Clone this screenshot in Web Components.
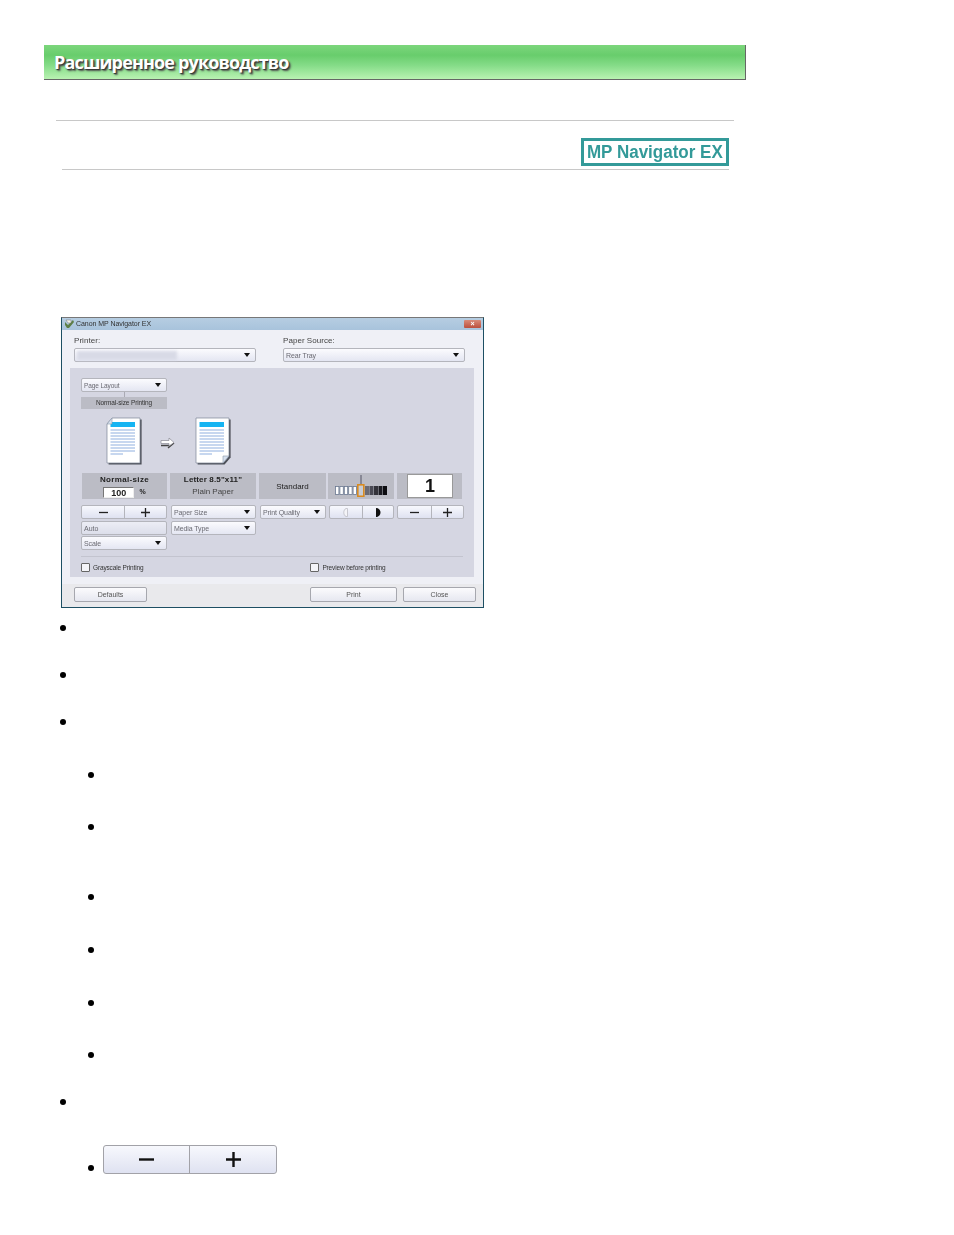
<!DOCTYPE html>
<html lang="ru">
<head>
<meta charset="utf-8">
<title>Расширенное руководство</title>
<style>
    html, body { margin: 0; background: #fff; }
    body { font-family: "Liberation Sans", Arial, sans-serif; height: 1235px; overflow: hidden; }
</style>
</head>
<body>
<guide-header>Расширенное руководство</guide-header>
<section-title>MP Navigator EX</section-title>
<print-dialog></print-dialog>
<bullet-list>
    <bullet-item gap="47"></bullet-item>
    <bullet-item gap="47"></bullet-item>
    <bullet-item gap="53"></bullet-item>
    <bullet-item level="1" gap="52"></bullet-item>
    <bullet-item level="1" gap="70"></bullet-item>
    <bullet-item level="1" gap="53"></bullet-item>
    <bullet-item level="1" gap="53"></bullet-item>
    <bullet-item level="1" gap="52"></bullet-item>
    <bullet-item level="1" gap="47"></bullet-item>
    <bullet-item gap="52"></bullet-item>
    <bullet-item level="1" gap="29" end><spin-buttons large></spin-buttons></bullet-item>
</bullet-list>

<script>
class GuideHeader extends HTMLElement {
    constructor() {
        super();
        this.attachShadow({ mode: "open" }).innerHTML = `
            <style>
                :host {
                    display: flex;
                    align-items: center;
                    box-sizing: border-box;
                    width: 702px;
                    height: 35px;
                    margin: 45px 0 0 44px;
                    padding: 0 0 0 10px;
                    border-bottom: 1px solid #666;
                    border-right: 1px solid #666;
                    background: linear-gradient(#7cd67c 0, #68cd6c 30%, #85dc88 60%, #b9f2b2 100%);
                    color: #fff;
                    font: bold 18px "Open Sans", sans-serif;
                    letter-spacing: -0.85px;
                    text-shadow: 1px 1px 1px #333, 2px 2px 2px #555;
                }
            </style>
            <slot></slot>
        `;
    }
}
customElements.define("guide-header", GuideHeader);

class SectionTitle extends HTMLElement {
    constructor() {
        super();
        this.attachShadow({ mode: "open" }).innerHTML = `
            <style>
                :host {
                    display: flex;
                    flex-direction: column;
                    margin: 40px 0 0 56px;
                    width: 678px;
                    border-top: 1px solid #c8c8c8;
                    padding-top: 17px;
                }
                .row { display: flex; justify-content: flex-end; margin-right: 5px; }
                .badge {
                    box-sizing: border-box;
                    display: flex;
                    align-items: center;
                    justify-content: center;
                    width: 148px;
                    height: 28px;
                    border: 3px solid #339a99;
                    color: #339a99;
                    font: bold 18px "Liberation Sans", sans-serif;
                    white-space: nowrap;
                }
                .badge span { display: inline-block; transform: scaleX(.945); }
                .rule { height: 1px; background: #c8c8c8; margin: 3px 5px 0 6px; }
            </style>
            <div class="row"><div class="badge"><span><slot></slot></span></div></div>
            <div class="rule"></div>
        `;
    }
}
customElements.define("section-title", SectionTitle);

class DropSelect extends HTMLElement {
    constructor() {
        super();
        this.attachShadow({ mode: "open" }).innerHTML = `
            <style>
                :host {
                    display: flex;
                    align-items: center;
                    justify-content: space-between;
                    box-sizing: border-box;
                    height: 14px;
                    padding: 0 5px 0 2px;
                    border: 1px solid #b4b5bc;
                    border-radius: 2px;
                    background: linear-gradient(#fbfbfe, #e4e6f2);
                    color: #6a6a72;
                    font-size: 7px;
                    letter-spacing: -0.1px;
                    white-space: nowrap;
                }
                i { width: 0; height: 0; border: 3.5px solid transparent; border-top: 4px solid #111; border-bottom: 0; }
            </style>
            <span><slot></slot></span><i></i>
        `;
    }
}
customElements.define("drop-select", DropSelect);

class SpinButtons extends HTMLElement {
    constructor() {
        super();
        const large = this.hasAttribute("large");
        const left = this.getAttribute("left");
        const minus = `<svg width="15" height="15" viewBox="0 0 15 15"><path d="M0 7.500h15" stroke="#111" stroke-width="2.400"/></svg>`;
        const plus = `<svg width="15" height="15" viewBox="0 0 15 15"><path d="M0 7.500h15M7.500 0v15" stroke="#111" stroke-width="2.400"/></svg>`;
        const smallMinus = `<svg width="9" height="9" viewBox="0 0 9 9"><path d="M0 4.500h9" stroke="#222" stroke-width="1.300"/></svg>`;
        const smallPlus = `<svg width="9" height="9" viewBox="0 0 9 9"><path d="M0 4.500h9M4.500 0v9" stroke="#222" stroke-width="1.300"/></svg>`;
        let a = large ? minus : smallMinus;
        let b = large ? plus : smallPlus;
        if (left === "half") {
            a = `<svg width="6" height="9" viewBox="0 0 6 9"><path d="M3 .5h1.500v8H3C1.500 8 .8 6 .8 4.500S1.500 1 3 .5z" fill="#f4f4f8" stroke="#bcbcc4" stroke-width=".8"/></svg>`;
            b = `<svg width="6" height="9" viewBox="0 0 6 9"><path d="M1 0c3 0 4.500 2.500 4.500 4.500S4 9 1 9z" fill="#111"/></svg>`;
        }
        this.attachShadow({ mode: "open" }).innerHTML = `
            <style>
                :host {
                    display: grid;
                    grid-template-columns: ${large ? "85px 1fr" : "1fr 1fr"};
                    box-sizing: border-box;
                    height: ${large ? 29 : 14}px;
                    width: ${large ? "174px" : "auto"};
                    border: 1px solid ${large ? "#a2a2a8" : "#b4b5bc"};
                    border-radius: ${large ? 3 : 2}px;
                    background: linear-gradient(#f7f8fd, #dfe2f1);
                }
                span { display: flex; align-items: center; justify-content: center; }
                span + span { border-left: 1px solid ${large ? "#a2a2a8" : "#b4b5bc"}; }
            </style>
            <span>${a}</span><span>${b}</span>
        `;
    }
}
customElements.define("spin-buttons", SpinButtons);

class DocIcon extends HTMLElement {
    constructor() {
        super();
        const top = this.getAttribute("fold") === "top";
        const corner = top
            ? `<path d="M2 7 7 1v6z" fill="#d6e0ee" stroke="#8a97aa" stroke-width=".6"/>`
            : `<path d="M35 39 29 46v-7z" fill="#d6e0ee" stroke="#8a97aa" stroke-width=".6"/>`;
        const page = top ? "M7 1H35V46H2V7z" : "M2 1H35V39L29 46H2z";
        let lines = "";
        for (let y = 13; y < 39; y += 3) {
            lines += `<path d="M5.500 ${y}H${y > 36 ? 18 : 30}" stroke="#a9c2e6" stroke-width="1.300"/>`;
        }
        this.attachShadow({ mode: "open" }).innerHTML = `
            <style>:host { display: block; width: 38px; height: 48px; }</style>
            <svg width="38" height="48" viewBox="0 0 38 48">
                <path d="${page}" transform="translate(1.600 1.400)" fill="#4d5058"/>
                <path d="${page}" fill="#fff" stroke="#7c8496" stroke-width=".7"/>
                <path d="M5.500 5H30V10H5.500z" fill="#16b4f2"/>
                ${lines}
                ${corner}
            </svg>
        `;
    }
}
customElements.define("doc-icon", DocIcon);

class PrintDialog extends HTMLElement {
    constructor() {
        super();
        this.attachShadow({ mode: "open" }).innerHTML = `
            <style>
                :host {
                    display: flex;
                    flex-direction: column;
                    box-sizing: border-box;
                    width: 423px;
                    height: 291px;
                    margin: 147px 0 0 61px;
                    border: 1px solid #1d4f63;
                    border-top-color: #777;
                    background: #eff0f6;
                    color: #444;
                    font: 8px "Liberation Sans", sans-serif;
                    filter: blur(0.4px);
                }
                .title {
                    display: flex;
                    align-items: center;
                    height: 12px;
                    padding: 0 2px 1px 2px;
                    gap: 1px;
                    box-sizing: border-box;
                    background: linear-gradient(#b6cde2, #a8c3dc);
                    color: #333;
                    font-size: 7px;
                    letter-spacing: -0.05px;
                }
                .title span { flex: 1; }
                .close {
                    width: 17px;
                    height: 8px;
                    border-radius: 1px;
                    background: linear-gradient(#d98a78, #bc4f3d);
                    color: #fff;
                    font: bold 7px/8px "Liberation Sans", sans-serif;
                    text-align: center;
                }
                .sources {
                    display: grid;
                    grid-template-columns: 182px 182px;
                    column-gap: 27px;
                    padding: 6px 0 0 12px;
                    height: 33px;
                    box-sizing: border-box;
                    margin-bottom: 5px;
                }
                .sources label { display: block; height: 12px; line-height: 10px; letter-spacing: .05px; }
                .redacted {
                    display: block;
                    width: 100px;
                    height: 9px;
                    background: #d8dae6;
                    filter: blur(1.5px);
                }
                .panel {
                    display: flex;
                    flex-direction: column;
                    box-sizing: border-box;
                    height: 209px;
                    margin: 0 9px 0 8px;
                    padding: 10px 10px 0 11px;
                    background: #d5d6e2;
                }
                .layout { display: flex; flex-direction: column; width: 86px; }
                .layout drop-select { font-size: 6.5px; }
                .tick { width: 1px; height: 5px; background: #aaaab4; margin: 0 auto; }
                .band {
                    height: 12px;
                    background: #bbbcc5;
                    color: #333;
                    font-size: 6.5px;
                    line-height: 12px;
                    text-align: center;
                    letter-spacing: -0.12px;
                    white-space: nowrap;
                }
                .docs { display: flex; align-items: center; height: 48px; margin: 8px 0 8px 24px; }
                .arrow { margin: 3px 19px 0 17px; }
                .grid {
                    display: grid;
                    grid-template-columns: 86px 86px 66px 66px 65px;
                    column-gap: 3px;
                    grid-template-rows: 26px 6px 14px 2px 14px 1px 14px;
                }
                .cell {
                    display: flex;
                    flex-direction: column;
                    align-items: center;
                    justify-content: center;
                    background: #bbbcc5;
                    color: #222;
                    white-space: nowrap;
                }
                .cell.first { margin-left: 1px; }
                .cell.std { margin-right: -1px; }
                .cell b { font-size: 8px; letter-spacing: .35px; line-height: 12px; }
                .cell b.letter { letter-spacing: .15px; }
                .cell em { font-style: normal; line-height: 12px; color: #444; }
                .scale { display: flex; align-items: center; gap: 5px; font-weight: bold; font-size: 7px; line-height: 12px; }
                .scale u {
                    width: 31px;
                    height: 11px;
                    box-sizing: border-box;
                    border: 1px solid #777;
                    border-right-color: #eee;
                    border-bottom-color: #eee;
                    background: #fff;
                    text-decoration: none;
                    font-size: 9px;
                    line-height: 10px;
                    text-align: center;
                }
                .count { box-sizing: border-box; padding: 1px 9px 1px 10px; }
                .count div {
                    width: 100%;
                    height: 100%;
                    background: #fff;
                    border: 1px solid #999;
                    box-sizing: border-box;
                    font: bold 18px/22px "Liberation Sans", sans-serif;
                    text-align: center;
                    color: #111;
                }
                .auto {
                    box-sizing: border-box;
                    padding-left: 2px;
                    height: 14px;
                    line-height: 13px;
                    border: 1px solid #b4b5bc;
                    border-radius: 2px;
                    background: linear-gradient(#ecedf5, #dcdeea);
                    color: #6a6a72;
                    font-size: 7px;
                }
                .col1 { grid-column: 1; }
                .col2 { grid-column: 2; margin-left: 1px; }
                .col3 { grid-column: 3; margin: 0 -1px 0 1px; }
                .col4 { grid-column: 4; margin-left: 1px; }
                .col5 { grid-column: 5; margin-right: -2px; }
                .r3 { grid-row: 3; }
                .r5 { grid-row: 5; }
                .r7 { grid-row: 7; }
                .rule { height: 1px; background: #c3c4cf; margin: 6px 0 0; width: 382px; }
                .checks { display: flex; height: 20px; align-items: center; font-size: 6.5px; letter-spacing: -0.15px; color: #333; }
                .checks label { display: flex; align-items: center; gap: 3px; }
                .checks label + label { margin-left: 167px; }
                .checks i {
                    box-sizing: border-box;
                    width: 9px;
                    height: 9px;
                    border: 1px solid #666;
                    border-radius: 1px;
                    background: #f4f4f8;
                }
                .footer {
                    flex: 1;
                    display: flex;
                    align-items: flex-start;
                    padding: 3px 7px 0 12px;
                    gap: 6px;
                    background: #e9e9ec;
                    margin-top: 7px;
                }
                .footer button {
                    box-sizing: border-box;
                    height: 15px;
                    padding: 0;
                    border: 1px solid #a6a7ae;
                    border-radius: 2px;
                    background: linear-gradient(#fbfbfd, #e6e7f0);
                    color: #555;
                    font: 7px "Liberation Sans", sans-serif;
                }
                .defaults { width: 73px; margin-right: 157px; }
                .print { width: 87px; }
                .closeBtn { width: 73px; }
            </style>
            <div class="title">
                <svg width="11" height="10" viewBox="0 0 11 10"><path d="M1 3 4 6 9 1l1 2-5 6H3L1 6z" fill="#5d7f46"/><path d="M2 1h5v3H4z" fill="#f0f2e8" stroke="#777" stroke-width=".5"/></svg>
                <span>Canon MP Navigator EX</span>
                <div class="close">×</div>
            </div>
            <div class="sources">
                <div><label>Printer:</label><drop-select><span class="redacted"></span></drop-select></div>
                <div><label>Paper Source:</label><drop-select>Rear Tray</drop-select></div>
            </div>
            <div class="panel">
                <div class="layout">
                    <drop-select>Page Layout</drop-select>
                    <div class="tick"></div>
                    <div class="band">Normal-size Printing</div>
                </div>
                <div class="docs">
                    <doc-icon fold="top"></doc-icon>
                    <svg class="arrow" width="15" height="12" viewBox="0 0 15 12">
                        <path d="M1 8.500h8M8 11l6-5" stroke="#444" stroke-width="1.400" fill="none"/>
                        <path d="M1 3.500h8V1l5 4.500-5 3.500V6.500H1z" fill="#fff" stroke="#8a8a94" stroke-width=".7"/>
                    </svg>
                    <doc-icon fold="bottom"></doc-icon>
                </div>
                <div class="grid">
                    <div class="cell first"><b>Normal-size</b><div class="scale"><u>100</u>%</div></div>
                    <div class="cell"><b class="letter">Letter 8.5"x11"</b><em>Plain Paper</em></div>
                    <div class="cell std">Standard</div>
                    <div class="cell">
                        <svg width="54" height="22" viewBox="0 0 54 22">
                            <path d="M27 0v9" stroke="#556" stroke-width="1"/>
                            <g fill="#fff" stroke="#6a7890" stroke-width=".8">
                                <rect x="1.500" y="11.500" width="3.400" height="8"/><rect x="5.900" y="11.500" width="3.400" height="8"/><rect x="10.300" y="11.500" width="3.400" height="8"/><rect x="14.700" y="11.500" width="3.400" height="8"/><rect x="19.100" y="11.500" width="3.400" height="8"/>
                            </g>
                            <rect x="23.800" y="9.800" width="6" height="11.500" fill="#c8ccd4" stroke="#d98b20" stroke-width="1.600"/>
                            <rect x="31" y="11" width="4" height="9" fill="#6a6a74"/>
                            <rect x="35.500" y="11" width="4" height="9" fill="#4a4a54"/>
                            <rect x="40" y="11" width="4" height="9" fill="#33333a"/>
                            <rect x="44.500" y="11" width="4" height="9" fill="#1c1c22"/>
                            <rect x="49" y="11" width="4" height="9" fill="#0c0c10"/>
                        </svg>
                    </div>
                    <div class="cell count"><div>1</div></div>
                    <spin-buttons class="col1 r3"></spin-buttons>
                    <drop-select class="col2 r3">Paper Size</drop-select>
                    <drop-select class="col3 r3">Print Quality</drop-select>
                    <spin-buttons class="col4 r3" left="half"></spin-buttons>
                    <spin-buttons class="col5 r3"></spin-buttons>
                    <div class="auto col1 r5">Auto</div>
                    <drop-select class="col2 r5">Media Type</drop-select>
                    <drop-select class="col1 r7">Scale</drop-select>
                </div>
                <div class="rule"></div>
                <div class="checks">
                    <label><i></i>Grayscale Printing</label>
                    <label><i></i>Preview before printing</label>
                </div>
            </div>
            <div class="footer">
                <button class="defaults">Defaults</button>
                <button class="print">Print</button>
                <button class="closeBtn">Close</button>
            </div>
        `;
    }
}
customElements.define("print-dialog", PrintDialog);

class BulletList extends HTMLElement {
    constructor() {
        super();
        this.attachShadow({ mode: "open" }).innerHTML = `
            <style>:host { display: flex; flex-direction: column; margin-top: 11px; }</style>
            <slot></slot>
        `;
    }
}
customElements.define("bullet-list", BulletList);

class BulletItem extends HTMLElement {
    constructor() {
        super();
        const level = Number(this.getAttribute("level") || 0);
        const gap = this.getAttribute("gap") || 47;
        const end = this.hasAttribute("end");
        this.attachShadow({ mode: "open" }).innerHTML = `
            <style>
                :host {
                    display: flex;
                    align-items: ${end ? "flex-end" : "flex-start"};
                    gap: 9.5px;
                    box-sizing: border-box;
                    height: ${gap}px;
                    padding-left: ${level ? 87.5 : 59.5}px;
                }
                i {
                    flex: none;
                    width: 6px;
                    height: 6px;
                    margin: ${end ? "0 0 3.3px" : "5.5px 0 0"};
                    border-radius: 50%;
                    background: #000;
                }
            </style>
            <i></i><slot></slot>
        `;
    }
}
customElements.define("bullet-item", BulletItem);
</script>
</body>
</html>
